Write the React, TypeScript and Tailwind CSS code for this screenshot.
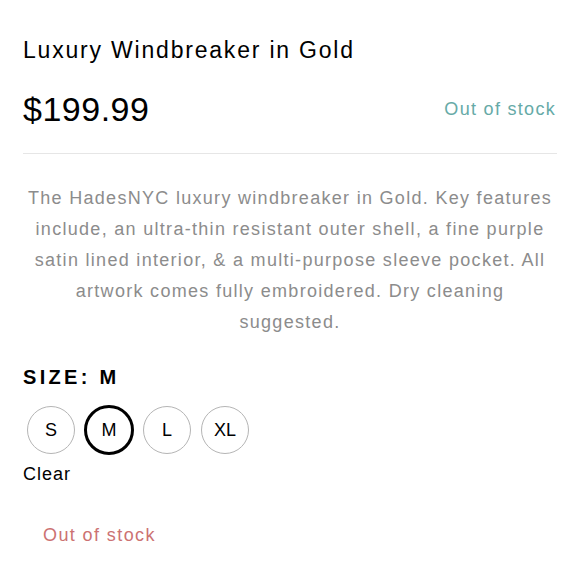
import React, { useState } from 'react';

const sizes = ['S', 'M', 'L', 'XL'];

const App: React.FC = () => {
  const [selected, setSelected] = useState('M');

  return (
    <div className="min-h-[580px] w-[580px] bg-white px-[23px] pt-[36px] font-['Liberation_Sans',Arial,sans-serif] text-black">
      <h1 className="text-[23px] leading-[28px] tracking-[1.8px] font-normal">Luxury Windbreaker in Gold</h1>

      <div className="mt-[25px] flex items-center justify-between border-b border-[#e6e6e6] pb-[24px]">
        <span className="text-[34px] leading-[40px] tracking-[0.5px]">$199.99</span>
        <span className="mr-px text-[18px] leading-[24px] tracking-[1.3px] text-[#66aaa7]">Out of stock</span>
      </div>

      <p className="-mx-[4px] mt-[29px] text-center text-[18px] leading-[31px] tracking-[1.3px] text-[#8c8c8c]">
        The HadesNYC luxury windbreaker in Gold. Key features<br />
        include, an ultra-thin resistant outer shell, a fine purple<br />
        satin lined interior, &amp; a multi-purpose sleeve pocket. All<br />
        artwork comes fully embroidered. Dry cleaning<br />
        suggested.
      </p>

      <div className="mt-[27px] text-[20px] leading-[24px] font-bold tracking-[3.3px]">SIZE: {selected}</div>

      <div className="mt-[17px] flex gap-[10px] pl-[4px]">
        {sizes.map((s) => (
          <button
            key={s}
            type="button"
            onClick={() => setSelected(s)}
            className={
              s === selected
                ? '-m-px flex h-[50px] w-[50px] items-center justify-center rounded-full border-[3px] border-black text-[18px]'
                : 'flex h-[48px] w-[48px] items-center justify-center rounded-full border border-[#b5b5b5] text-[18px]'
            }
          >
            {s}
          </button>
        ))}
      </div>

      <div className="mt-[9px] text-[18px] leading-[22px] tracking-[1px]">Clear</div>

      <div className="mt-[39px] pl-[20px] text-[18px] leading-[22px] tracking-[1.4px] text-[#cc7272]">Out of stock</div>
    </div>
  );
};

export default App;
